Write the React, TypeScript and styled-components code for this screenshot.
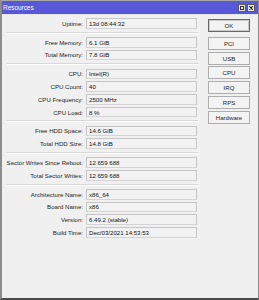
import React from "react";
import styled, { createGlobalStyle } from "styled-components";

const Global = createGlobalStyle`
  html, body { margin: 0; padding: 0; background: #f0f0f0; }
  body { font-family: "Liberation Sans", Arial, sans-serif; }
  #root { width: 259px; height: 300px; }
`;

const Window = styled.div`
  box-sizing: border-box;
  width: 259px;
  height: 300px;
  background: #f0f0f0;
  border-top: 1px solid #a8a8a8;
  border-left: 2px solid #8c8c8c;
  border-right: 1px solid #8c8c8c;
  border-bottom: 2px solid #4a4a4a;
  display: flex;
  flex-direction: column;
`;

const TitleBar = styled.div`
  height: 13px;
  background: #5858d8;
  display: flex;
  align-items: center;
  padding: 0 3px 0 1px;
  border-bottom: 1px solid #e4e4e4;
`;

const TitleText = styled.span`
  flex: 1;
  color: #ffffff;
  font-size: 6.5px;
  letter-spacing: -0.05px;
`;

const TitleButton = styled.div`
  box-sizing: border-box;
  width: 8px;
  height: 8px;
  margin-left: 1px;
  background: #e6e6e6;
  border: 1px solid #5a5a5a;
  display: flex;
  align-items: center;
  justify-content: center;
`;

const Body = styled.div`
  display: flex;
  padding: 3px 9px 0 2px;
  gap: 10px;
`;

const Fields = styled.div`
  display: flex;
  flex-direction: column;
  gap: 2.05px;
`;

const Row = styled.div`
  display: flex;
  align-items: center;
  gap: 3px;
  height: 10.67px;
`;

const Label = styled.div`
  width: 79px;
  text-align: right;
  font-size: 6.1px;
  color: #1e1e1e;
  white-space: nowrap;
`;

const Value = styled.div`
  box-sizing: border-box;
  width: 111px;
  height: 10.67px;
  border: 1px solid #c6c6c6;
  border-bottom-color: #d4d4d4;
  background: #f2f2f2;
  font-size: 6.1px;
  color: #111111;
  padding-left: 2px;
  display: flex;
  align-items: center;
  white-space: nowrap;
  overflow: hidden;
`;

const Separator = styled.div`
  height: 1px;
  width: 191px;
  margin: 1.1px 0 1.1px 3px;
  background: #d8d8d8;
  border-bottom: 1px solid #ffffff;
`;

const Buttons = styled.div`
  display: flex;
  flex-direction: column;
  gap: 1.8px;
  padding-top: 0.5px;
`;

const Button = styled.div<{ $default?: boolean }>`
  box-sizing: border-box;
  width: 42px;
  height: ${(p) => (p.$default ? "13.5px" : "13px")};
  margin-bottom: ${(p) => (p.$default ? "3px" : "0")};
  border: 1px solid ${(p) => (p.$default ? "#6a6a6a" : "#adadad")};
  box-shadow: ${(p) => (p.$default ? "inset 0 0 0 1px #c8c8c8" : "none")};
  background: #f3f3f3;
  font-size: 6.1px;
  color: #1e1e1e;
  display: flex;
  align-items: center;
  justify-content: center;
`;

type Item = [string, string];

const groups: Item[][] = [
  [["Uptime:", "13d 08:44:32"]],
  [
    ["Free Memory:", "6.1 GiB"],
    ["Total Memory:", "7.8 GiB"],
  ],
  [
    ["CPU:", "Intel(R)"],
    ["CPU Count:", "40"],
    ["CPU Frequency:", "2500 MHz"],
    ["CPU Load:", "8 %"],
  ],
  [
    ["Free HDD Space:", "14.6 GiB"],
    ["Total HDD Size:", "14.8 GiB"],
  ],
  [
    ["Sector Writes Since Reboot:", "12 659 688"],
    ["Total Sector Writes:", "12 659 688"],
  ],
  [
    ["Architecture Name:", "x86_64"],
    ["Board Name:", "x86"],
    ["Version:", "6.49.2 (stable)"],
    ["Build Time:", "Dec/03/2021 14:53:53"],
  ],
];

const buttons = ["PCI", "USB", "CPU", "IRQ", "RPS", "Hardware"];

export default function App() {
  return (
    <>
      <Global />
      <Window>
        <TitleBar>
          <TitleText>Resources</TitleText>
          <TitleButton>
            <svg width="4" height="4" viewBox="0 0 4 4">
              <rect x="0.5" y="0.5" width="3" height="3" fill="none" stroke="#333" strokeWidth="1" />
            </svg>
          </TitleButton>
          <TitleButton>
            <svg width="4" height="4" viewBox="0 0 4 4">
              <path d="M0.3 0.3 L3.7 3.7 M3.7 0.3 L0.3 3.7" stroke="#222" strokeWidth="1.1" />
            </svg>
          </TitleButton>
        </TitleBar>
        <Body>
          <Fields>
            {groups.map((g, gi) => (
              <React.Fragment key={gi}>
                {gi > 0 && <Separator />}
                {g.map(([l, v]) => (
                  <Row key={l}>
                    <Label>{l}</Label>
                    <Value>{v}</Value>
                  </Row>
                ))}
              </React.Fragment>
            ))}
          </Fields>
          <Buttons>
            <Button $default>OK</Button>
            {buttons.map((b) => (
              <Button key={b}>{b}</Button>
            ))}
          </Buttons>
        </Body>
      </Window>
    </>
  );
}
